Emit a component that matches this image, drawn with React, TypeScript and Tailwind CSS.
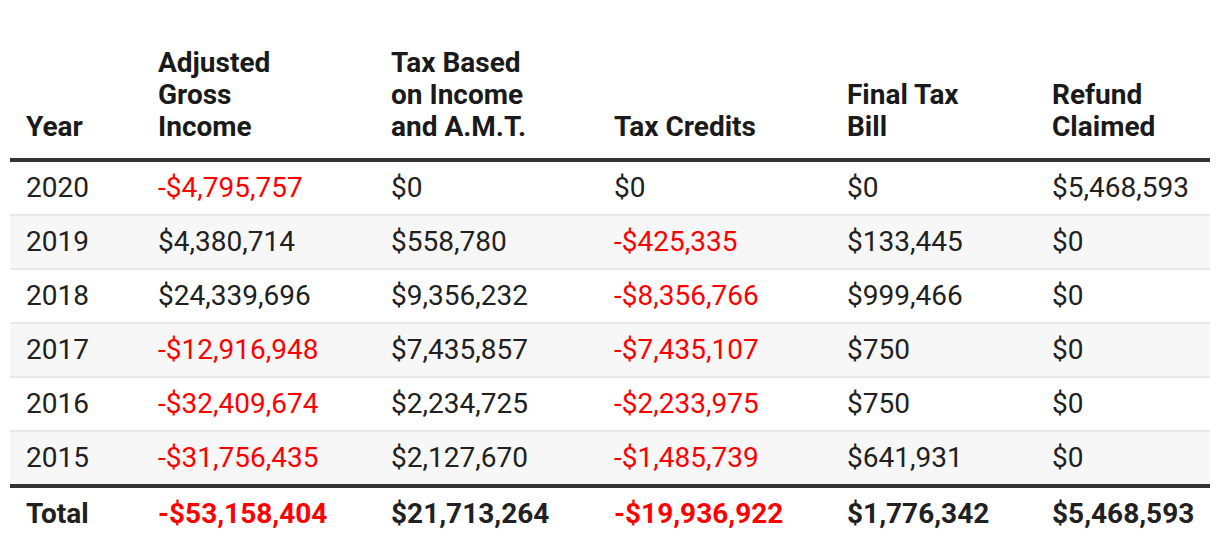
import React from "react";

type Row = {
  year: string;
  agi: string;
  taxBased: string;
  credits: string;
  finalBill: string;
  refund: string;
};

const rows: Row[] = [
  { year: "2020", agi: "-$4,795,757", taxBased: "$0", credits: "$0", finalBill: "$0", refund: "$5,468,593" },
  { year: "2019", agi: "$4,380,714", taxBased: "$558,780", credits: "-$425,335", finalBill: "$133,445", refund: "$0" },
  { year: "2018", agi: "$24,339,696", taxBased: "$9,356,232", credits: "-$8,356,766", finalBill: "$999,466", refund: "$0" },
  { year: "2017", agi: "-$12,916,948", taxBased: "$7,435,857", credits: "-$7,435,107", finalBill: "$750", refund: "$0" },
  { year: "2016", agi: "-$32,409,674", taxBased: "$2,234,725", credits: "-$2,233,975", finalBill: "$750", refund: "$0" },
  { year: "2015", agi: "-$31,756,435", taxBased: "$2,127,670", credits: "-$1,485,739", finalBill: "$641,931", refund: "$0" },
];

const total: Row = {
  year: "Total",
  agi: "-$53,158,404",
  taxBased: "$21,713,264",
  credits: "-$19,936,922",
  finalBill: "$1,776,342",
  refund: "$5,468,593",
};

const money = (v: string) => (v.startsWith("-") ? "text-[#ff0000]" : "");

export default function App() {
  return (
    <div
      className="bg-white w-[1220px] h-[550px] px-[10px] pt-[47px] text-[#212121]"
      style={{ fontFamily: "Roboto, 'Liberation Sans', sans-serif" }}
    >
      <table className="w-[1200px] border-separate border-spacing-0 text-[28px] leading-[32px] table-fixed">
        <colgroup>
          <col className="w-[132px]" />
          <col className="w-[233px]" />
          <col className="w-[223px]" />
          <col className="w-[233px]" />
          <col className="w-[205px]" />
          <col className="w-[174px]" />
        </colgroup>
        <thead>
          <tr className="font-bold text-[#1a1a1a] text-left align-bottom">
            <th className="pl-4 pb-[15px] border-b-4 border-[#333333] font-bold">Year</th>
            <th className="pl-4 pb-[15px] border-b-4 border-[#333333] font-bold">
              Adjusted<br />Gross<br />Income
            </th>
            <th className="pl-4 pb-[15px] border-b-4 border-[#333333] font-bold">
              Tax Based<br />on Income<br />and A.M.T.
            </th>
            <th className="pl-4 pb-[15px] border-b-4 border-[#333333] font-bold">Tax Credits</th>
            <th className="pl-4 pb-[15px] border-b-4 border-[#333333] font-bold">
              Final Tax<br />Bill
            </th>
            <th className="pl-4 pb-[15px] border-b-4 border-[#333333] font-bold">
              Refund<br />Claimed
            </th>
          </tr>
        </thead>
        <tbody>
          {rows.map((r, i) => {
            const last = i === rows.length - 1;
            const cell = `pl-4 py-[10px] ${last ? "" : "border-b-2 border-[#e8e8e8]"}`;
            return (
              <tr key={r.year} className={i % 2 === 1 ? "bg-[#f7f7f7]" : "bg-white"}>
                <td className={cell}>{r.year}</td>
                <td className={`${cell} ${money(r.agi)}`}>{r.agi}</td>
                <td className={`${cell} ${money(r.taxBased)}`}>{r.taxBased}</td>
                <td className={`${cell} ${money(r.credits)}`}>{r.credits}</td>
                <td className={`${cell} ${money(r.finalBill)}`}>{r.finalBill}</td>
                <td className={`${cell} ${money(r.refund)}`}>{r.refund}</td>
              </tr>
            );
          })}
        </tbody>
        <tfoot>
          <tr className="font-bold">
            <td className="pl-4 py-[10px] border-t-4 border-[#333333]">{total.year}</td>
            <td className={`pl-4 py-[10px] border-t-4 border-[#333333] ${money(total.agi)}`}>{total.agi}</td>
            <td className="pl-4 py-[10px] border-t-4 border-[#333333]">{total.taxBased}</td>
            <td className={`pl-4 py-[10px] border-t-4 border-[#333333] ${money(total.credits)}`}>{total.credits}</td>
            <td className="pl-4 py-[10px] border-t-4 border-[#333333]">{total.finalBill}</td>
            <td className="pl-4 py-[10px] border-t-4 border-[#333333]">{total.refund}</td>
          </tr>
        </tfoot>
      </table>
    </div>
  );
}
